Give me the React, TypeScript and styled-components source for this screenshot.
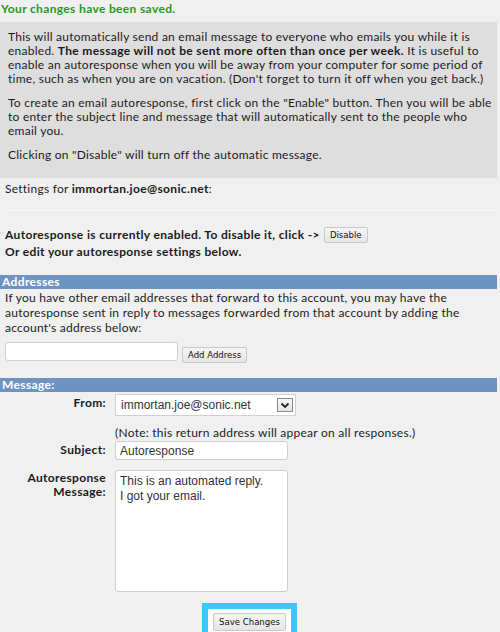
import styled, { createGlobalStyle } from 'styled-components';

const GlobalStyle = createGlobalStyle`
  html, body {
    margin: 0;
    padding: 0;
    background: #f0f0f0;
  }
  body {
    font-family: Lato, "Open Sans", sans-serif;
    font-size: 12px;
    letter-spacing: 0.25px;
    color: #1b1b1b;
  }
  b {
    letter-spacing: 0.35px;
  }
`;

const Page = styled.div`
  width: 500px;
  padding-top: 2px;
`;

const SavedNotice = styled.div`
  margin: 0 0 6px 1px;
  line-height: 14px;
  font-weight: 700;
  color: #1f9a1f;
  letter-spacing: 0.35px;
`;

const InfoBox = styled.div`
  width: 497px;
  box-sizing: border-box;
  background: #dedede;
  padding: 8px 3px 6px 8px;

  p {
    margin: 0 0 10px;
    line-height: 14px;
  }
`;

const SettingsFor = styled.div`
  margin: 4px 0 0 5px;
  line-height: 14px;
`;

const Rule = styled.div`
  margin: 14px 5px 0 5px;
  border-top: 1px solid #fbfbfb;
`;

const StatusBlock = styled.div`
  margin: 15px 0 15px 5px;
  font-weight: 700;
  letter-spacing: 0.35px;
  line-height: 17px;
`;

const StatusLine = styled.div`
  display: flex;
  align-items: center;
  gap: 4px;
`;

const GreyButton = styled.button<{ $h?: number }>`
  font-family: "DejaVu Sans Condensed", "Liberation Sans", sans-serif;
  font-size: 9.5px;
  letter-spacing: 0;
  color: #111;
  background: linear-gradient(#f5f5f5, #e5e5e5);
  border: 1px solid #c9c9c9;
  border-radius: 2px;
  padding: 0 5px;
  height: ${({ $h }) => $h ?? 16}px;
  line-height: ${({ $h }) => ($h ?? 16) - 2}px;
  cursor: pointer;
`;

const SectionBar = styled.div`
  width: 497px;
  height: 14px;
  line-height: 14px;
  background: #6e94c4;
  color: #fff;
  font-weight: 700;
  padding-left: 2px;
  box-sizing: border-box;
  letter-spacing: 0.35px;
`;

const SectionText = styled.p`
  margin: 1px 4px 0 5px;
  line-height: 15px;
`;

const AddRow = styled.div`
  display: flex;
  align-items: flex-end;
  gap: 4px;
  margin: 7px 0 17px 5px;

  button {
    margin-bottom: -2px;
  }
`;

const TextInput = styled.input<{ $w: number }>`
  width: ${({ $w }) => $w}px;
  height: 19px;
  box-sizing: border-box;
  border: 1px solid #cfcfcf;
  border-radius: 3px;
  background: #fff;
  padding: 0 4px;
  font-family: "Liberation Sans", Arial, sans-serif;
  font-size: 12px;
  letter-spacing: 0;
  color: #333;
  outline: none;
`;

const FormGrid = styled.div`
  display: grid;
  grid-template-columns: 106px 1fr;
  column-gap: 9px;
  align-items: start;
  padding-top: 2px;
`;

const Label = styled.div<{ $top: number }>`
  text-align: right;
  font-weight: 700;
  letter-spacing: 0.35px;
  line-height: 14px;
  padding-top: ${({ $top }) => $top}px;
`;

const Field = styled.div<{ $mb: number }>`
  margin-bottom: ${({ $mb }) => $mb}px;
`;

const SelectBox = styled.div`
  width: 181px;
  height: 22px;
  box-sizing: border-box;
  border: 1px solid #d0d0d0;
  background: #fff;
  display: flex;
  align-items: center;
  justify-content: space-between;
  padding: 0 2px 0 5px;
  font-family: "Liberation Sans", Arial, sans-serif;
  font-size: 12px;
  letter-spacing: 0;
  color: #333;
`;

const SelectArrow = styled.span`
  width: 16px;
  height: 14px;
  box-sizing: border-box;
  border: 1px solid #8a8a8a;
  background: linear-gradient(#f8f8f8, #e4e4e4);
  display: flex;
  align-items: center;
  justify-content: center;
`;

const Note = styled.div`
  line-height: 14px;
  margin-bottom: 1px;
`;

const MessageArea = styled.textarea`
  width: 173px;
  height: 122px;
  box-sizing: border-box;
  border: 1px solid #cfcfcf;
  border-radius: 3px;
  background: #fff;
  padding: 3px 4px;
  resize: none;
  font-family: "Liberation Sans", Arial, sans-serif;
  font-size: 12px;
  letter-spacing: 0;
  line-height: 15px;
  color: #333;
  outline: none;
`;

const SaveRow = styled.div`
  display: flex;
  justify-content: center;
  padding-top: 8px;
  margin-left: -1px;
`;

const Highlight = styled.div`
  display: flex;
  border: 6px solid #33ccff;
  background: #fdfdfd;
  padding: 4px 5px 1px;
`;

export default function App() {
  return (
    <Page>
      <GlobalStyle />
      <SavedNotice>Your changes have been saved.</SavedNotice>
      <InfoBox>
        <p>
          This will automatically send an email message to everyone who emails you while it is
          enabled. <b>The message will not be sent more often than once per week.</b> It is useful
          to enable an autoresponse when you will be away from your computer for some period of
          time, such as when you are on vacation. (Don't forget to turn it off when you get back.)
        </p>
        <p>
          To create an email autoresponse, first click on the "Enable" button. Then you will be able
          to enter the subject line and message that will automatically sent to the people who
          email you.
        </p>
        <p>Clicking on "Disable" will turn off the automatic message.</p>
      </InfoBox>
      <SettingsFor>
        Settings for <b>immortan.joe@sonic.net</b>:
      </SettingsFor>
      <Rule />
      <StatusBlock>
        <StatusLine>
          Autoresponse is currently enabled. To disable it, click -&gt;
          <GreyButton>Disable</GreyButton>
        </StatusLine>
        <div>Or edit your autoresponse settings below.</div>
      </StatusBlock>

      <SectionBar>Addresses</SectionBar>
      <SectionText>
        If you have other email addresses that forward to this account, you may have the
        autoresponse sent in reply to messages forwarded from that account by adding the account's
        address below:
      </SectionText>
      <AddRow>
        <TextInput $w={173} />
        <GreyButton>Add Address</GreyButton>
      </AddRow>

      <SectionBar>Message:</SectionBar>
      <FormGrid>
        <Label $top={2}>From:</Label>
        <Field $mb={10}>
          <SelectBox>
            immortan.joe@sonic.net
            <SelectArrow>
              <svg width="10" height="7" viewBox="0 0 10 7">
                <path d="M1.5 1.5 L5 5 L8.5 1.5" fill="none" stroke="#222" strokeWidth="1.8" />
              </svg>
            </SelectArrow>
          </SelectBox>
        </Field>
        <div />
        <Note>(Note: this return address will appear on all responses.)</Note>
        <Label $top={2}>Subject:</Label>
        <Field $mb={10}>
          <TextInput $w={173} defaultValue="Autoresponse" />
        </Field>
        <Label $top={1}>
          Autoresponse
          <br />
          Message:
        </Label>
        <Field $mb={0}>
          <MessageArea defaultValue={'This is an automated reply.\nI got your email.'} />
        </Field>
      </FormGrid>
      <SaveRow>
        <Highlight>
          <GreyButton $h={18}>Save Changes</GreyButton>
        </Highlight>
      </SaveRow>
    </Page>
  );
}
